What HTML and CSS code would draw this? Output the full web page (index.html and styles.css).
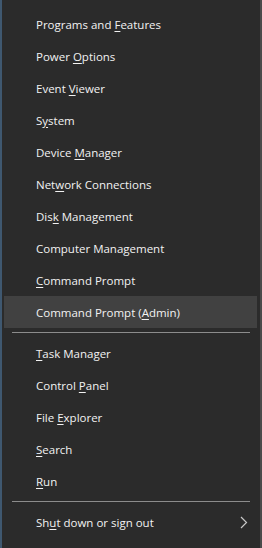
FILE: index.html
```html
<!DOCTYPE html>
<html lang="en">
<head>
  <meta charset="UTF-8" />
  <title>Quick Link Menu</title>
  <link rel="stylesheet" href="styles.css">
</head>
<body>
  <nav class="menu">
    <ul class="group">
      <li class="item"><span>Programs and <u>F</u>eatures</span></li>
      <li class="item"><span>Power <u>O</u>ptions</span></li>
      <li class="item"><span>Event <u>V</u>iewer</span></li>
      <li class="item"><span>S<u>y</u>stem</span></li>
      <li class="item"><span>Device <u>M</u>anager</span></li>
      <li class="item"><span>Net<u>w</u>ork Connections</span></li>
      <li class="item"><span>Dis<u>k</u> Management</span></li>
      <li class="item"><span>Computer Management</span></li>
      <li class="item"><span><u>C</u>ommand Prompt</span></li>
      <li class="item active"><span>Command Prompt (<u>A</u>dmin)</span></li>
    </ul>
    <hr class="sep">
    <ul class="group">
      <li class="item"><span><u>T</u>ask Manager</span></li>
      <li class="item"><span>Control <u>P</u>anel</span></li>
      <li class="item"><span>File <u>E</u>xplorer</span></li>
      <li class="item"><span><u>S</u>earch</span></li>
      <li class="item"><span><u>R</u>un</span></li>
    </ul>
    <hr class="sep">
    <ul class="group">
      <li class="item has-sub">
        <span>Sh<u>u</u>t down or sign out</span>
        <svg class="chevron" width="8" height="13" viewBox="0 0 8 13">
          <path d="M1 1 L6.5 6.5 L1 12" fill="none" stroke="#c8c8c8" stroke-width="1.2"/>
        </svg>
      </li>
    </ul>
  </nav>
</body>
</html>
```

FILE: styles.css
```css
* {
  box-sizing: border-box;
}

body {
  margin: 0;
  background: #2b2b2b;
  font-family: 'Open Sans', 'Noto Sans', sans-serif;
  font-size: 11.5px;
  color: #f2f2f2;
}

.menu {
  height: 548px;
  padding: 8px 0 10px 0;
  background: #2b2b2b;
  border-left: 2px solid #3f5870;
  border-right: 2px solid #4a4a4a;
}

.group {
  list-style: none;
  margin: 0;
  padding: 0;
}

.item {
  display: flex;
  align-items: center;
  height: 32px;
  margin: 0 3px 0 2px;
  padding-left: 32px;
  padding-right: 9px;
}

.item u {
  text-underline-offset: 2px;
}

.item.active {
  background: #414141;
}

.has-sub {
  justify-content: space-between;
}

.chevron {
  display: block;
}

.sep {
  margin: 4px 10px;
  border: none;
  border-top: 1px solid #8c8c8c;
  height: 1px;
}
```
